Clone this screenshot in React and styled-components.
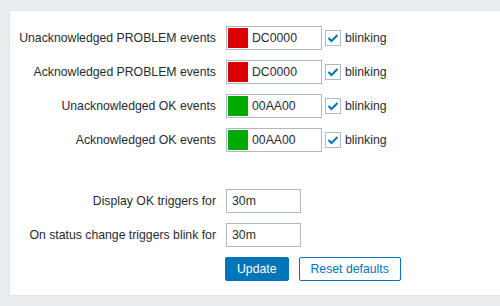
import React from "react";
import styled, { createGlobalStyle } from "styled-components";

const GlobalStyle = createGlobalStyle`
  body {
    margin: 0;
    background: #ebeef0;
    font-family: "Liberation Sans", Arial, sans-serif;
    font-size: 12.25px;
    color: #1f2c33;
  }
`;

const Panel = styled.div`
  margin: 10px 0 0 9px;
  height: 286px;
  box-sizing: border-box;
  padding-top: 15px;
  background: #fff;
  border: 1px solid #dfe4e7;
  border-right: none;
`;

const Form = styled.div`
  display: grid;
  grid-template-columns: 206px auto;
  column-gap: 10px;
  row-gap: 10px;
  align-items: center;
`;

const Label = styled.label`
  text-align: right;
  white-space: nowrap;
  margin-top: ${p => (p.$spaced ? "27px" : "0")};
`;

const Field = styled.div`
  display: flex;
  align-items: center;
  height: 24px;
  margin-top: ${p => (p.$spaced ? "27px" : "0")};
`;

const ColorInput = styled.div`
  width: 96px;
  height: 24px;
  box-sizing: border-box;
  border: 1px solid #acbbc2;
  padding: 1px;
  display: flex;
  align-items: center;
  gap: 4px;
`;

const Swatch = styled.span`
  width: 20px;
  height: 20px;
  background: ${p => p.$color};
`;

const TextInput = styled.div`
  width: 75px;
  height: 24px;
  box-sizing: border-box;
  border: 1px solid #acbbc2;
  padding: 0 5px;
  display: flex;
  align-items: center;
`;

const Check = styled.span`
  width: 16px;
  height: 16px;
  box-sizing: border-box;
  border: 1px solid #acbbc2;
  margin: 0 4px 0 3px;
  display: flex;
  align-items: center;
  justify-content: center;
`;

const Buttons = styled.div`
  display: flex;
  gap: 10px;
  margin-left: -1px;
`;

const Button = styled.button`
  height: 24px;
  padding: 0 11px;
  font-family: inherit;
  font-size: 12.25px;
  border-radius: 2px;
  border: 1px solid #0275b8;
  background: ${p => (p.$primary ? "#0275b8" : "#fff")};
  color: ${p => (p.$primary ? "#fff" : "#0275b8")};
`;

const rows = [
  { label: "Unacknowledged PROBLEM events", color: "#dc0000", code: "DC0000" },
  { label: "Acknowledged PROBLEM events", color: "#dc0000", code: "DC0000" },
  { label: "Unacknowledged OK events", color: "#00aa00", code: "00AA00" },
  { label: "Acknowledged OK events", color: "#00aa00", code: "00AA00" }
];

const Tick = () => (
  <svg width="12" height="10" viewBox="0 0 12 10">
    <polyline
      points="1.5,5 4.5,8 10.5,2"
      fill="none"
      stroke="#0275b8"
      strokeWidth="2"
    />
  </svg>
);

const App = () => (
  <>
    <GlobalStyle />
    <Panel>
      <Form>
        {rows.map(row => (
          <React.Fragment key={row.label}>
            <Label>{row.label}</Label>
            <Field>
              <ColorInput>
                <Swatch $color={row.color} />
                {row.code}
              </ColorInput>
              <Check>
                <Tick />
              </Check>
              blinking
            </Field>
          </React.Fragment>
        ))}
        <Label $spaced>Display OK triggers for</Label>
        <Field $spaced>
          <TextInput>30m</TextInput>
        </Field>
        <Label>On status change triggers blink for</Label>
        <Field>
          <TextInput>30m</TextInput>
        </Field>
        <span />
        <Buttons>
          <Button $primary>Update</Button>
          <Button>Reset defaults</Button>
        </Buttons>
      </Form>
    </Panel>
  </>
);

export default App;
